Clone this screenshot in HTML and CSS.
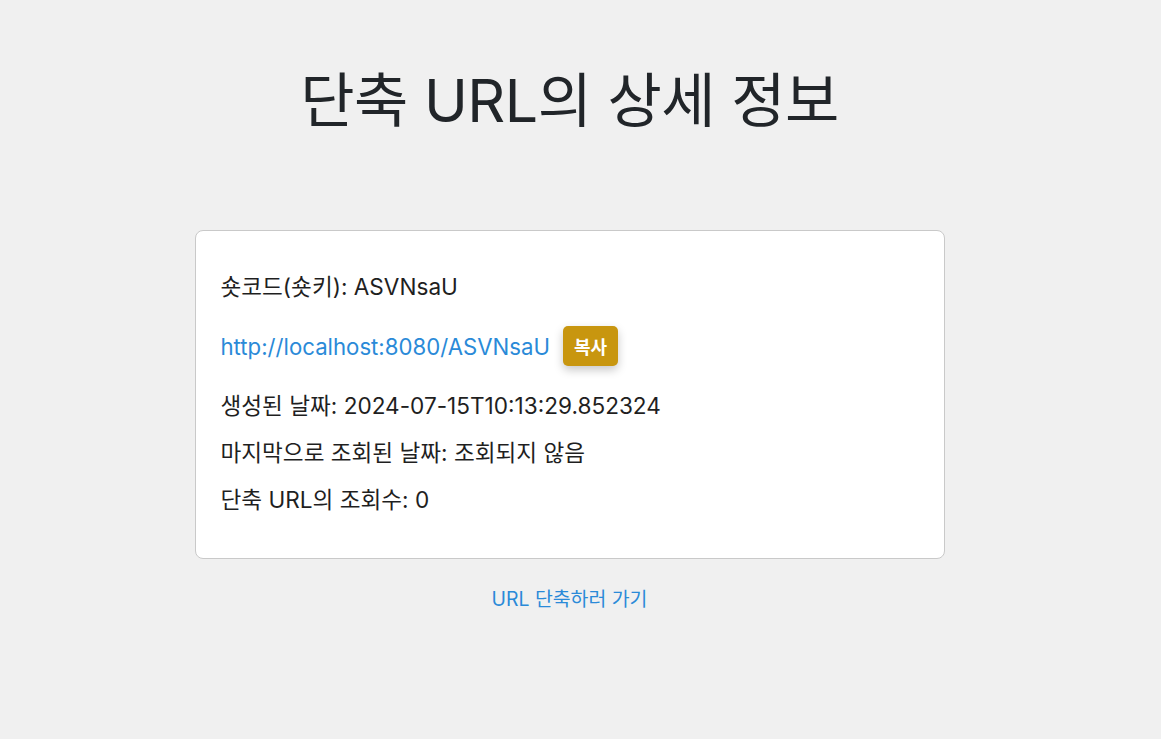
FILE: index.html
```html
<!DOCTYPE html>
<html lang="ko">
<head>
<meta charset="utf-8">
<title>단축 URL의 상세 정보</title>
<link rel="stylesheet" href="styles.css">
</head>
<body>
<main class="page">
  <h1 class="title">단축 URL의 상세 정보</h1>
  <section class="card">
    <p class="row">숏코드(숏키): ASVNsaU</p>
    <div class="row row-link">
      <a class="short-link" href="#">http://localhost:8080/ASVNsaU</a>
      <button class="copy-btn" type="button">복사</button>
    </div>
    <p class="row">생성된 날짜: 2024-07-15T10:13:29.852324</p>
    <p class="row">마지막으로 조회된 날짜: 조회되지 않음</p>
    <p class="row">단축 URL의 조회수: 0</p>
  </section>
  <a class="back-link" href="#">URL 단축하러 가기</a>
</main>
</body>
</html>
```
FILE: styles.css
```css
html, body {
  margin: 0;
  padding: 0;
  background: #f0f0f0;
}

body {
  font-family: Inter, "Noto Sans CJK KR", "Liberation Sans", sans-serif;
  color: #212529;
}

.page {
  width: 1139px;
  padding-top: 67px;
  display: flex;
  flex-direction: column;
  align-items: center;
}

.title {
  margin: 0;
  font-size: 59px;
  line-height: 67px;
  font-weight: 400;
  color: #212529;
  letter-spacing: -0.5px;
}

.card {
  margin-top: 96px;
  width: 750px;
  box-sizing: border-box;
  background: #ffffff;
  border: 1px solid #c9c9c9;
  border-radius: 8px;
  padding: 42px 25px 45px;
  display: flex;
  flex-direction: column;
  gap: 20px;
}

.row {
  margin: 0;
  font-size: 22.6px;
  line-height: 27px;
  color: #1f1f1f;
}

.row-link {
  display: flex;
  align-items: center;
  padding: 6px 0;
}

.short-link {
  color: #2a8ad8;
  text-decoration: none;
  font-size: 22.2px;
}

.copy-btn {
  margin-left: 13px;
  height: 40px;
  padding: 0 11px;
  border: none;
  border-radius: 5px;
  background: #c8960f;
  color: #ffffff;
  font-family: Inter, "Noto Sans CJK KR", sans-serif;
  font-size: 18px;
  font-weight: 600;
  box-shadow: 0 4px 10px rgba(0, 0, 0, 0.22);
}

.back-link {
  margin-top: 29px;
  font-size: 19.4px;
  line-height: 22px;
  color: #2a8ad8;
  text-decoration: none;
}
```
